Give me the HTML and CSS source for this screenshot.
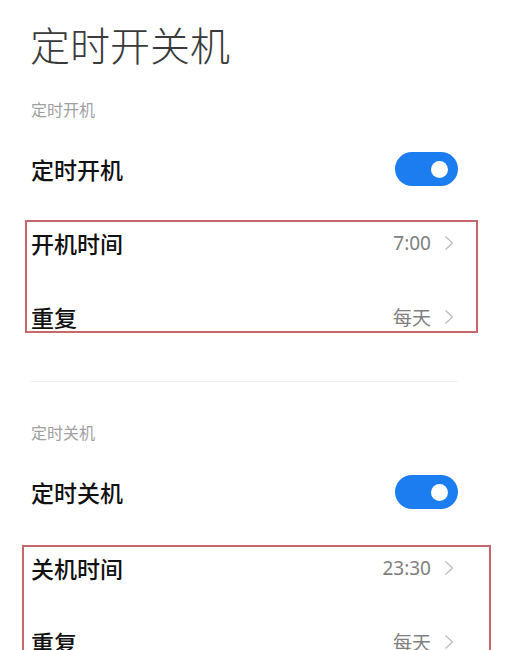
FILE: index.html
```html
<!DOCTYPE html>
<html lang="zh-CN">
<head>
    <meta charset="UTF-8">
    <meta name="viewport" content="width=device-width, initial-scale=1.0">
    <title>定时开关机</title>
    <link rel="stylesheet" href="styles.css">
</head>
<body>
    <div class="page">
        <h1 class="title">定时开关机</h1>

        <p class="section-label">定时开机</p>
        <div class="switch-row">
            <span class="row-name">定时开机</span>
            <span class="toggle"><span class="knob"></span></span>
        </div>
        <div class="mark-box">
            <div class="row">
                <span class="row-name">开机时间</span>
                <span class="row-value">7:00 <svg class="chevron" viewBox="0 0 10 16"><polyline points="1.5,1.5 8.5,8 1.5,14.5"/></svg></span>
            </div>
            <div class="row">
                <span class="row-name">重复</span>
                <span class="row-value">每天 <svg class="chevron" viewBox="0 0 10 16"><polyline points="1.5,1.5 8.5,8 1.5,14.5"/></svg></span>
            </div>
        </div>

        <div class="divider"></div>

        <p class="section-label">定时关机</p>
        <div class="switch-row">
            <span class="row-name">定时关机</span>
            <span class="toggle"><span class="knob"></span></span>
        </div>
        <div class="mark-box mark-box-wide">
            <div class="row">
                <span class="row-name">关机时间</span>
                <span class="row-value">23:30 <svg class="chevron" viewBox="0 0 10 16"><polyline points="1.5,1.5 8.5,8 1.5,14.5"/></svg></span>
            </div>
            <div class="row">
                <span class="row-name">重复</span>
                <span class="row-value">每天 <svg class="chevron" viewBox="0 0 10 16"><polyline points="1.5,1.5 8.5,8 1.5,14.5"/></svg></span>
            </div>
        </div>
    </div>
</body>
</html>
```

FILE: styles.css
```css
body {
    margin: 0;
    background: #fff;
    font-family: 'Noto Sans', 'Noto Sans CJK SC', sans-serif;
    color: #111;
    overflow: hidden;
}
.page {
    padding: 18px 49px 0 31px;
}
.title {
    margin: 0;
    font-size: 40px;
    line-height: 56px;
    font-weight: 300;
    color: #3a3a3a;
    margin-left: -1px;
}
.section-label {
    margin: 26px 0 0;
    font-size: 16px;
    line-height: 20px;
    color: #a0a0a0;
}
.switch-row {
    display: flex;
    align-items: center;
    justify-content: space-between;
    height: 50px;
    margin-top: 25px;
}
.row-name {
    font-size: 23px;
    font-weight: 500;
    color: #111;
}
.toggle {
    display: flex;
    align-items: center;
    justify-content: flex-end;
    width: 63px;
    height: 34px;
    padding-right: 10px;
    box-sizing: border-box;
    border-radius: 17px;
    background: #1c7df1;
    margin-right: -1px;
}
.knob {
    width: 17px;
    height: 17px;
    border-radius: 50%;
    background: #fff;
}
.mark-box {
    margin: 26px -21px 0 -6px;
    padding: 0 19px 0 4px;
    height: 109px;
    border: 2px solid #c8676b;
    display: flex;
    flex-direction: column;
    gap: 32px;
}
.mark-box-wide {
    margin: 28px -34px 0 -9px;
    padding: 0 32px 0 7px;
}
.row {
    display: flex;
    align-items: center;
    justify-content: space-between;
    height: 42px;
    flex-shrink: 0;
}
.row-value {
    display: flex;
    align-items: center;
    gap: 13px;
    font-size: 19px;
    color: #808080;
    margin-right: 3px;
}
.chevron {
    width: 10px;
    height: 16px;
    fill: none;
    stroke: #bdbdbd;
    stroke-width: 1.3;
}
.divider {
    height: 1px;
    background: #ececec;
    margin-top: 48px;
}
.section-label + .switch-row {
    margin-top: 24px;
}
.divider + .section-label {
    margin-top: 41px;
}
```
